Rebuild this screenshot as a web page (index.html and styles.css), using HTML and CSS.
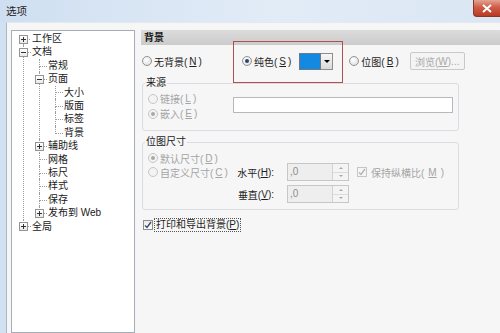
FILE: index.html
```html
<!DOCTYPE html>
<html lang="zh-CN">
<head>
    <meta charset="UTF-8">
    <meta name="viewport" content="width=device-width, initial-scale=1.0">
    <title>选项</title>
    <link rel="stylesheet" href="styles.css">
</head>
<body>
    <div class="window">
        <div class="titlebar">
            <span class="title">选项</span>
            <span class="close">
                <svg width="10" height="9" viewBox="0 0 10 9"><path d="M1 1 L9 8 M9 1 L1 8" stroke="#fff" stroke-width="2" fill="none"/></svg>
            </span>
        </div>
        <div class="frame">
            <div class="client">
                <div class="tree">
                    <ul>
                        <li class="first"><span class="btn plus"></span>工作区</li>
                        <li><span class="btn minus"></span>文档
                            <ul>
                                <li>常规</li>
                                <li><span class="btn minus"></span>页面
                                    <ul>
                                        <li>大小</li>
                                        <li>版面</li>
                                        <li>标签</li>
                                        <li>背景</li>
                                    </ul>
                                </li>
                                <li><span class="btn plus"></span>辅助线</li>
                                <li>网格</li>
                                <li>标尺</li>
                                <li>样式</li>
                                <li>保存</li>
                                <li><span class="btn plus"></span>发布到 Web</li>
                            </ul>
                        </li>
                        <li><span class="btn plus"></span>全局</li>
                    </ul>
                </div>

                <div class="page">
                    <div class="page-head">背景</div>

                    <div class="mode-row">
                        <label class="opt opt-none"><span class="radio"></span>无背景(<u>N</u>)</label>
                        <label class="opt"><span class="radio on"></span>纯色(<u>S</u>)</label>
                        <span class="swatch"><span class="swatch-color"></span><span class="swatch-arrow"></span></span>
                        <label class="opt opt-bitmap"><span class="radio"></span>位图(<u>B</u>)</label>
                        <span class="browse">浏览(<u>W</u>)...</span>
                    </div>

                    <fieldset class="group">
                        <legend>来源</legend>
                        <div class="source-body">
                            <div class="source-opts">
                                <label class="opt line disabled"><span class="radio"></span>链接(<u>L</u>)</label>
                                <label class="opt line disabled"><span class="radio on"></span>嵌入(<u>E</u>)</label>
                            </div>
                            <span class="path-field"></span>
                        </div>
                    </fieldset>

                    <fieldset class="group size-group">
                        <legend>位图尺寸</legend>
                        <div class="size-body">
                            <label class="opt cell-a disabled"><span class="radio on"></span>默认尺寸(<u>D</u>)</label>
                            <label class="opt cell row-b col-1 disabled"><span class="radio"></span>自定义尺寸(<u>C</u>)</label>
                            <span class="cell row-b col-2 size-label">水平(<u>H</u>):</span>
                            <span class="cell row-b col-3"><span class="spin"><span class="spin-val">,0</span><span class="spin-btns"><i class="up"></i><i class="down"></i></span></span></span>
                            <label class="opt cell row-b col-4 keep disabled"><span class="check"><svg width="8" height="8" viewBox="0 0 8 8"><path d="M1 4.5 L3 6.5 L7 1" stroke="#b4b4b4" stroke-width="1.4" fill="none"/></svg></span>保持纵横比(<u>M</u>)</label>
                            <span class="cell row-c col-2 size-label">垂直(<u>V</u>):</span>
                            <span class="cell row-c col-3"><span class="spin"><span class="spin-val">,0</span><span class="spin-btns"><i class="up"></i><i class="down"></i></span></span></span>
                        </div>
                    </fieldset>

                    <label class="print-row"><span class="check"><svg width="8" height="8" viewBox="0 0 8 8"><path d="M1 4.5 L3 6.5 L7 1" stroke="#3a4c66" stroke-width="1.4" fill="none"/></svg></span><span class="focus">打印和导出背景(<u>P</u>)</span></label>

                    <div class="highlight"></div>
                </div>
            </div>
        </div>
    </div>
</body>
</html>
```

FILE: styles.css
```css
* {
    box-sizing: border-box;
}
body {
    margin: 0;
    font-family: "Liberation Sans", "Noto Sans CJK SC", sans-serif;
    font-size: 10px;
    color: #1e1e1e;
    background: #f6f6f6;
    text-autospace: no-autospace;
}
u {
    text-decoration: underline;
}
.window {
    width: 500px;
    height: 333px;
    overflow: hidden;
    display: flex;
    flex-direction: column;
    background: linear-gradient(to right, #d2e1f2, #dbe7f4);
}
.titlebar {
    height: 22px;
    flex: none;
    display: flex;
    align-items: flex-start;
    background: linear-gradient(to right, #cfdff1, #e2ecf7 55%, #dae6f3);
}
.title {
    padding: 5px 0 0 6px;
    line-height: 13px;
    font-size: 10.5px;
    color: #222;
}
.close {
    margin-left: auto;
    width: 27px;
    height: 17px;
    display: flex;
    align-items: center;
    justify-content: center;
    background: linear-gradient(#e3a392, #cf5d47 45%, #b83a24);
    border: 1px solid #8c3626;
    border-top: none;
    border-right: none;
    border-radius: 0 0 0 4px;
}
.frame {
    flex: 1;
    display: flex;
    padding-left: 6px;
}
.client {
    flex: 1;
    display: flex;
    background: #f6f6f6;
    border-left: 1px solid #a9b7c7;
    border-top: 1px solid #e4e9ee;
    padding: 7px 0 0 4px;
}

/* tree */
.tree {
    width: 124px;
    flex: none;
    background: #fff;
    border: 1px solid #a7adb5;
    padding-top: 1px;
    color: #1a1a1a;
}
.tree ul {
    list-style: none;
    margin: 0;
    padding: 0;
}
.tree > ul {
    margin-left: 11px;
}
.tree ul ul {
    margin-left: 7px;
}
.tree li {
    position: relative;
    padding-left: 9px;
    line-height: 13.4px;
    white-space: nowrap;
}
.tree li::before {
    content: '';
    position: absolute;
    left: 0;
    top: 0;
    width: 7px;
    height: 6.7px;
    border-left: 1px dotted #9c9c9c;
    border-bottom: 1px dotted #9c9c9c;
}
.tree li::after {
    content: '';
    position: absolute;
    left: 0;
    top: 6.7px;
    bottom: 0;
    border-left: 1px dotted #9c9c9c;
}
.tree li:last-child::after {
    display: none;
}
.tree li.first::before {
    border-left: none;
}
.btn {
    position: absolute;
    left: -4px;
    top: 2.7px;
    width: 9px;
    height: 9px;
    border: 1px solid #949494;
    background: linear-gradient(#fff, #e9e9e9);
    z-index: 1;
}
.btn::before {
    content: '';
    position: absolute;
    left: 1px;
    top: 3px;
    width: 5px;
    height: 1px;
    background: #333;
}
.btn.plus::after {
    content: '';
    position: absolute;
    left: 3px;
    top: 1px;
    width: 1px;
    height: 5px;
    background: #333;
}

/* right page */
.page {
    flex: 1;
    margin-left: 6px;
    position: relative;
}
.page-head {
    height: 15px;
    line-height: 15px;
    padding-left: 3px;
    font-weight: bold;
    background: linear-gradient(#dcdcdc, #cbcbcb);
    color: #1a1a1a;
}
.mode-row {
    display: flex;
    align-items: center;
    height: 18px;
    margin-top: 7px;
    padding-left: 1px;
}
.opt {
    display: flex;
    align-items: center;
    gap: 2px;
    white-space: nowrap;
}
.radio {
    position: relative;
    flex: none;
    width: 10px;
    height: 10px;
    border-radius: 50%;
    border: 1px solid #939393;
    background: radial-gradient(circle at 40% 35%, #fff, #d9d9d9);
}
.radio.on::after {
    content: '';
    position: absolute;
    left: 2px;
    top: 2px;
    width: 4px;
    height: 4px;
    border-radius: 50%;
    background: #27466a;
}
.disabled {
    color: #a4a4a4;
}
.disabled .radio {
    border-color: #c6c6c6;
    background: #f3f3f3;
}
.disabled .radio.on::after {
    background: #a9a9a9;
}
.opt-none {
    width: 100px;
}
.swatch {
    display: flex;
    height: 17px;
    margin-left: 8px;
}
.swatch-color {
    width: 22px;
    background: #1389e1;
    border: 1px solid #6f7a85;
}
.swatch-arrow {
    width: 12px;
    display: flex;
    align-items: center;
    justify-content: center;
    border: 1px solid #8d8d8d;
    border-left: none;
    background: linear-gradient(#f7f7f7, #dadada);
}
.swatch-arrow::after {
    content: '';
    border-top: 3px solid #000;
    border-left: 3px solid transparent;
    border-right: 3px solid transparent;
}
.opt-bitmap {
    margin-left: 16px;
}
.browse {
    margin-left: 11px;
    width: 55px;
    height: 18px;
    display: flex;
    align-items: center;
    justify-content: center;
    border: 1px solid #c9c9c9;
    border-radius: 2px;
    background: #f4f4f4;
    color: #a9a9a9;
}
.highlight {
    position: absolute;
    left: 92px;
    top: 11px;
    width: 110px;
    height: 42px;
    border: 1px solid #b24f4f;
}

/* group boxes */
.group {
    margin: 6px 0 0 1px;
    width: 317px;
    min-width: 0;
    padding: 0;
    border: 1px solid #d9dde2;
    border-radius: 3px;
}
.group legend {
    margin-left: 2px;
    padding: 0 1px;
    line-height: 14px;
    color: #1a1a1a;
}
.source-body {
    display: flex;
    padding: 0 0 9px 5px;
}
.source-opts {
    width: 85px;
    padding-top: 1px;
}
.opt.line {
    height: 15px;
}
.path-field {
    width: 220px;
    height: 16px;
    margin-top: 7px;
    border: 1px solid #b5b8bd;
    background: #fff;
}
.size-group {
    margin-top: 4px;
}
.size-body {
    display: grid;
    grid-template-columns: 82px 44px 75px auto;
    grid-template-rows: 10px 22px 18px;
    padding: 4px 0 6px 5px;
}
.cell-a {
    grid-row: 1;
    grid-column: 1;
    height: 10px;
}
.cell {
    display: flex;
    align-items: center;
    height: 18px;
}
.row-b {
    grid-row: 2;
}
.row-c {
    grid-row: 3;
}
.col-1 {
    grid-column: 1;
}
.col-2 {
    grid-column: 2;
}
.col-3 {
    grid-column: 3;
}
.col-4 {
    grid-column: 4;
}
.size-label {
    justify-content: flex-end;
    color: #1e1e1e;
}
.spin {
    margin-left: 13px;
    width: 62px;
    height: 18px;
    display: flex;
    border: 1px solid #c7c7c7;
    background: #eeeeee;
}
.spin-val {
    flex: 1;
    padding-left: 2px;
    line-height: 15px;
    color: #8d8d8d;
}
.spin-btns {
    width: 16px;
    display: flex;
    flex-direction: column;
    border-left: 1px solid #d3d3d3;
    background: #f4f4f4;
}
.spin-btns i {
    flex: 1;
    display: flex;
    align-items: center;
    justify-content: center;
}
.spin-btns i::after {
    content: '';
    border-left: 2px solid transparent;
    border-right: 2px solid transparent;
}
.spin-btns .up::after {
    border-bottom: 2px solid #a8a8a8;
}
.spin-btns .down {
    border-top: 1px solid #dcdcdc;
}
.spin-btns .down::after {
    border-top: 2px solid #a8a8a8;
}
.keep {
    margin-left: 8px;
    gap: 4px;
}
.check {
    flex: none;
    width: 10px;
    height: 10px;
    display: flex;
    align-items: center;
    justify-content: center;
    border: 1px solid #8e8e8e;
    background: linear-gradient(#e9e9e9, #fff);
}
.disabled .check {
    border-color: #c6c6c6;
    background: #f5f5f5;
}
.print-row {
    display: flex;
    align-items: center;
    height: 14px;
    margin: 8px 0 0 2px;
}
.focus {
    margin-left: 1px;
    padding: 0 1px;
    line-height: 12px;
    border: 1px dotted #555;
}
```
